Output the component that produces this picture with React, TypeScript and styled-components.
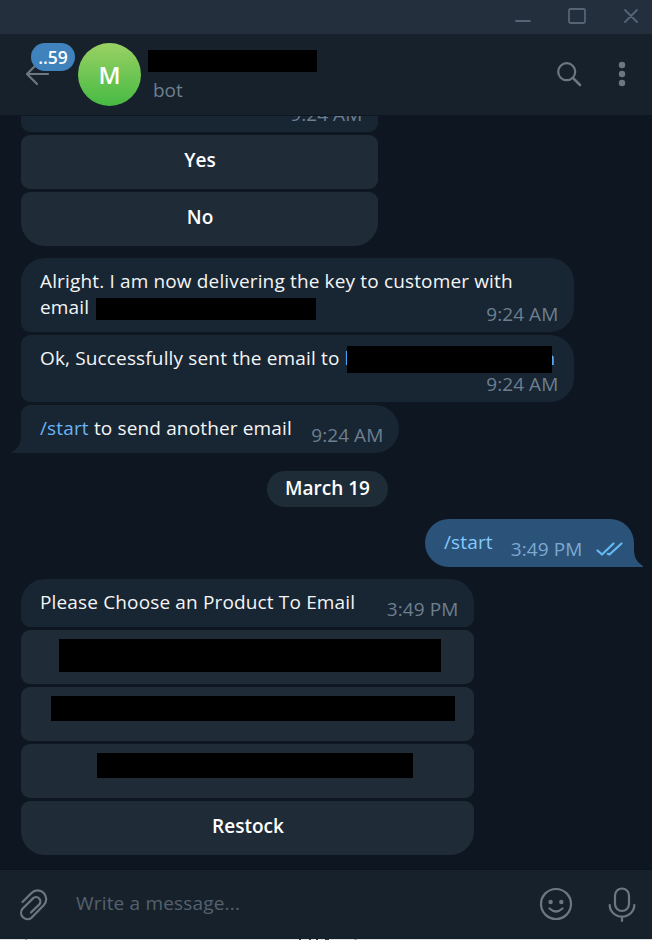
import React from "react";
import styled, { createGlobalStyle, css } from "styled-components";

const Global = createGlobalStyle`
  * { box-sizing: border-box; }
  html, body { margin: 0; height: 100%; background: #0e1621; overflow: hidden; }
  body { font-family: "Open Sans", "Noto Sans", sans-serif; font-size: 19px; }
  button { font: inherit; border: 0; margin: 0; padding: 0; background: none; color: inherit; }
`;

const Window = styled.div`
  display: flex;
  flex-direction: column;
  width: 652px;
  height: 940px;
  overflow: hidden;
  background: #0e1621;
`;

const TitleBar = styled.div`
  display: flex;
  flex: none;
  height: 34px;
  justify-content: flex-end;
  background: #242f3d;
`;

const Header = styled.header`
  display: flex;
  flex: none;
  height: 81px;
  background: #17212b;
`;

const BackArea = styled.button`
  position: relative;
  width: 78px;
  height: 80px;
`;

const Unread = styled.span`
  position: absolute;
  left: 31px;
  top: 9px;
  width: 44px;
  height: 28px;
  border-radius: 14px;
  background: #4082bc;
  color: #fff;
  font-weight: 600;
  font-size: 17.5px;
  line-height: 29px;
  text-align: center;
`;

const Avatar = styled.div`
  width: 63px;
  height: 63px;
  margin-top: 9px;
  border-radius: 50%;
  background: linear-gradient(#9ad164, #46ba43);
  color: #fff;
  font-weight: 600;
  font-size: 24px;
  line-height: 64px;
  text-align: center;
`;

const Peer = styled.div`
  flex: 1;
  padding: 16px 0 0 7px;
`;

const Status = styled.div`
  margin: 4px 0 0 5px;
  line-height: 28px;
  color: #6d7f8f;
`;

const Redacted = styled.div<{ $w: number; $h: number }>`
  flex: none;
  width: ${(p) => p.$w}px;
  height: ${(p) => p.$h}px;
  background: #000;
`;

const EmailMask = styled(Redacted)`
  margin: 4px 0 0 2px;
`;

/* Lies over the address, leaving only its outermost strokes visible. */
const RecipientMask = styled(Redacted)`
  position: relative;
  z-index: 1;
  margin: 1px -8px 0 -3px;
`;

const Glyph = styled.svg`
  display: block;
  flex: none;
  fill: none;
  stroke-linecap: round;
  stroke-linejoin: round;
`;

const Checks = styled(Glyph)`
  margin: 0 -6px 0 4px;
`;

const History = styled.main`
  display: flex;
  flex: none;
  flex-direction: column;
  height: 754px;
  padding: 0 18px 0 21px;
  border-top: 1px solid #0d161f;
  overflow: hidden;
`;

const Group = styled.section<{ $w?: number }>`
  display: flex;
  flex: none;
  flex-direction: column;
  gap: 3px;
  width: ${(p) => (p.$w ? `${p.$w}px` : "auto")};
  margin-bottom: 12px;
`;

const Bubble = styled.div<{ $w: number; $h: number; $radius: string; $out?: boolean }>`
  position: relative;
  display: flex;
  flex: none;
  justify-content: space-between;
  align-self: ${(p) => (p.$out ? "flex-end" : "flex-start")};
  width: ${(p) => p.$w}px;
  height: ${(p) => p.$h}px;
  padding: 10px 16px 0 19px;
  border-radius: ${(p) => p.$radius};
  background: ${(p) => (p.$out ? "#2b5278" : "#182533")};
  color: #f5f5f5;
`;

const ClippedBubble = styled(Bubble)`
  justify-content: flex-end;
  align-items: flex-end;
  padding-top: 0;
  overflow: hidden;
`;

const Message = styled.div`
  line-height: 26px;
  letter-spacing: 0.15px;
  white-space: nowrap;
`;

const Line = styled.div`
  display: flex;
  height: 26px;
`;

const Time = styled.time<{ $out?: boolean; $overlap?: boolean }>`
  display: flex;
  align-self: flex-end;
  height: 26px;
  margin-bottom: 5px;
  margin-right: -0.4px;
  line-height: 26px;
  letter-spacing: 0.08px;
  white-space: nowrap;
  color: ${(p) => (p.$out ? "#7da8d3" : "#6d7f8f")};
  ${(p) =>
    p.$overlap &&
    css`
      position: absolute;
      right: 16px;
      bottom: 0;
    `}
`;

const Link = styled.span<{ $out?: boolean }>`
  color: ${(p) => (p.$out ? "#83caff" : "#6ab3f3")};
`;

const Tail = styled.svg<{ $out?: boolean }>`
  position: absolute;
  bottom: 0;
  ${(p) => (p.$out ? "right: -9px" : "left: -9px; transform: scaleX(-1)")};
  fill: ${(p) => (p.$out ? "#2b5278" : "#182533")};
`;

const Key = styled.button<{ $last?: boolean; $top?: number; $shift?: number }>`
  display: flex;
  flex: none;
  justify-content: center;
  height: 54px;
  padding-top: ${(p) => p.$top ?? 12}px;
  padding-left: ${(p) => p.$shift ?? 0}px;
  border-radius: ${(p) => (p.$last ? "9px 9px 24px 24px" : "9px")};
  background: #1f2c38;
  color: #fff;
  font-weight: 600;
  line-height: 26px;
`;

const DatePill = styled.div`
  flex: none;
  align-self: center;
  width: 121px;
  height: 36px;
  margin: 6px 0 12px -1px;
  padding-left: 1px;
  border-radius: 18px;
  background: #1e2c38;
  color: #fff;
  font-weight: 600;
  line-height: 34px;
  text-align: center;
`;

const Composer = styled.footer`
  display: flex;
  flex: none;
  height: 70px;
  background: #17212b;
  border-top: 1px solid #0b131c;
`;

const Field = styled.div`
  flex: 1;
  padding-left: 8px;
  line-height: 67px;
  letter-spacing: 0.18px;
  color: #53616e;
`;

const DesktopEdge = styled.div`
  height: 1px;
  flex: none;
  background: #e2e4e8;
`;

const TailShape = ({ out }: { out?: boolean }) => (
  <Tail $out={out} width="12" height="16" viewBox="21 8 12 16">
    <path d="M21 8H24Q24.500 18.500 33 23V24H21Z" />
  </Tail>
);

export default function App() {
  return (
    <>
      <Global />
      <Window>
        <TitleBar>
          <Glyph width="152" height="34" viewBox="500 0 152 34" stroke="#556573" strokeWidth="1.8">
            <path d="M516 21H530M625 10L637 22M637 10L625 22" />
            <rect x="569" y="9" width="16" height="14" rx="1.5" />
          </Glyph>
        </TitleBar>

        <Header>
          <BackArea aria-label="Back">
            <Glyph width="78" height="80" viewBox="0 34 78 80" stroke="#6b7883" strokeWidth="2.2">
              <path d="M48 74H27M37 64L27 74L37 84" />
            </Glyph>
            <Unread>..59</Unread>
          </BackArea>
          <Avatar>M</Avatar>
          <Peer>
            <Redacted $w={169} $h={22} />
            <Status>bot</Status>
          </Peer>
          <Glyph width="112" height="80" viewBox="540 34 112 80" stroke="#6b7883" strokeWidth="2.2">
            <circle cx="566.7" cy="71.7" r="8.5" />
            <path d="M573 78L580 85" strokeWidth="2.5" />
            <g fill="#6b7883" stroke="none">
              <circle cx="622" cy="65" r="3.2" />
              <circle cx="622" cy="74" r="3.2" />
              <circle cx="622" cy="83" r="3.2" />
            </g>
          </Glyph>
        </Header>

        <History>
          <Group $w={357}>
            <ClippedBubble $w={357} $h={16} $radius="0 0 9px 9px">
              <Time>9:24 AM</Time>
            </ClippedBubble>
            <Key $shift={1}>Yes</Key>
            <Key $last $shift={1}>No</Key>
          </Group>

          <Group>
            <Bubble $w={553} $h={74} $radius="24px 24px 24px 9px">
              <Message>
                Alright. I am now delivering the key to customer with
                <Line>
                  email&nbsp;
                  <EmailMask $w={220} $h={22} />
                </Line>
              </Message>
              <Time $overlap>9:24 AM</Time>
            </Bubble>
            <Bubble $w={553} $h={67} $radius="9px 24px 24px 9px">
              <Message>
                <Line>
                  Ok, Successfully sent the email to&nbsp;
                  <Link>l</Link>
                  <RecipientMask $w={205} $h={27} />
                  <Link>n</Link>
                </Line>
              </Message>
              <Time $overlap>9:24 AM</Time>
            </Bubble>
            <Bubble $w={378} $h={48} $radius="9px 24px 24px 0">
              <TailShape />
              <Message>
                <Link>/start</Link> to send another email
              </Message>
              <Time>9:24 AM</Time>
            </Bubble>
          </Group>

          <DatePill>March 19</DatePill>

          <Group>
            <Bubble $out $w={209} $h={48} $radius="24px 24px 0 24px">
              <TailShape out />
              <Message>
                <Link $out>/start</Link>
              </Message>
              <Time $out>
                3:49 PM
                <Checks width="38" height="26" viewBox="0 1 38 26" stroke="#65b9f4" strokeWidth="2.2">
                  <path d="M11.500 15.500L16 19.500L27.500 8.500M21.800 18.800L23.500 19.500L35.500 8.500" />
                </Checks>
              </Time>
            </Bubble>
          </Group>

          <Group $w={453}>
            <Bubble $w={453} $h={48} $radius="24px 24px 9px 9px">
              <Message>Please Choose an Product To Email</Message>
              <Time>3:49 PM</Time>
            </Bubble>
            <Key $top={9} $shift={5}><Redacted $w={382} $h={33} /></Key>
            <Key $top={9} $shift={11}><Redacted $w={404} $h={25} /></Key>
            <Key $top={9} $shift={15}><Redacted $w={316} $h={25} /></Key>
            <Key $last $shift={1}>Restock</Key>
          </Group>
        </History>

        <Composer>
          <Glyph width="68" height="69" viewBox="-0.5 870 68 69" stroke="#6b7883" strokeWidth="2.2">
            <path d="M22 902L31 893A8.600 8.600 0 0 1 43.200 905.200L31 917.800A6.400 6.400 0 0 1 22 908.800L32.500 898.400A4.300 4.300 0 0 1 38.600 904.600L30.500 912.500" />
          </Glyph>
          <Field>Write a message...</Field>
          <Glyph width="122" height="69" viewBox="530 870 122 69" stroke="#6b7883" strokeWidth="2.2">
            <circle cx="556" cy="904" r="15" />
            <path d="M549.500 908.500Q556 914.500 562.500 908.500" />
            <g fill="#6b7883" stroke="none">
              <circle cx="550.600" cy="902" r="2.200" />
              <circle cx="561.300" cy="902" r="2.200" />
            </g>
            <rect x="615" y="888.500" width="14" height="22.500" rx="7" />
            <path d="M609.700 905A12.300 11.600 0 0 0 634.300 905M622 917V921" />
          </Glyph>
        </Composer>
        <DesktopEdge>
          <Glyph width="652" height="1" viewBox="0 0 652 1">
            <path fill="#34383f" d="M299 0h2v1h-2zM309 0h2v1h-2zM316 0h2v1h-2zM325 0h4v1h-4z" />
            <path fill="#a4a8ad" d="M25 0h2v1h-2zM354 0h3v1h-3z" />
          </Glyph>
        </DesktopEdge>
      </Window>
    </>
  );
}
